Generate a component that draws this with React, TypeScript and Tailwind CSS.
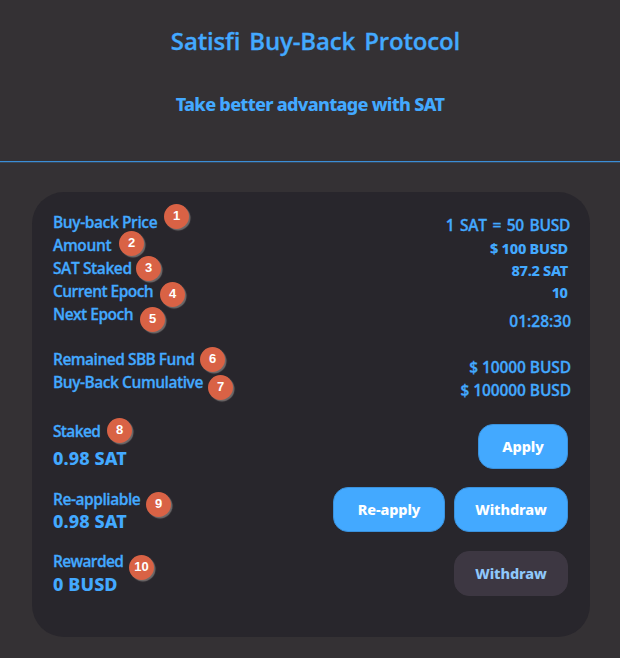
import { clsx } from "clsx";

type Label = { no: number; text: string; tracking: string; badge: string };
type Value = { text: string; style: string };

const uiFont = "font-['Open_Sans','Noto_Sans',sans-serif] font-semibold [-webkit-text-stroke:0.3px_#43a9ff]";
const boldFont = "font-['Noto_Sans',sans-serif] font-extrabold";

const epochLabels: Label[] = [
  { no: 1, text: "Buy-back Price", tracking: "tracking-[-0.4px]", badge: "left-[111px] top-[-7px]" },
  { no: 2, text: "Amount", tracking: "tracking-[-0.35px]", badge: "left-[66px] top-[-3px]" },
  { no: 3, text: "SAT Staked", tracking: "tracking-[-0.4px]", badge: "left-[83px] top-[-1px]" },
  { no: 4, text: "Current Epoch", tracking: "tracking-[-0.55px]", badge: "left-[107px] top-[2px]" },
  { no: 5, text: "Next Epoch", tracking: "tracking-[-0.5px]", badge: "left-[87px] top-[4px]" },
];

const fundLabels: Label[] = [
  { no: 6, text: "Remained SBB Fund", tracking: "tracking-[-0.5px]", badge: "left-[147px] top-[-1px]" },
  { no: 7, text: "Buy-Back Cumulative", tracking: "tracking-[-0.45px]", badge: "left-[155px] top-[4px]" },
];

const epochValues: Value[] = [
  { text: "1 SAT = 50 BUSD", style: `${uiFont} h-[23px] mr-px text-[15.5px] tracking-[-0.3px] [word-spacing:2px]` },
  { text: "$ 100 BUSD", style: `${boldFont} h-[23px] mr-[3px] text-[14.5px] tracking-[-0.25px]` },
  { text: "87.2 SAT", style: `${boldFont} h-[22px] mr-[3px] text-[14.5px] tracking-[-0.3px]` },
  { text: "10", style: `${boldFont} h-[22px] mr-[4px] text-[14.5px] tracking-[-0.8px]` },
  { text: "01:28:30", style: `${uiFont} mt-[6px] h-[23px] text-[15.5px]` },
];

const fundValues: Value[] = [
  { text: "$ 10000 BUSD", style: `${uiFont} h-[23px] text-[15.5px] tracking-[-0.1px]` },
  { text: "$ 100000 BUSD", style: `${uiFont} h-[23px] text-[15.5px] tracking-[-0.1px]` },
];

function LabelRow({ label }: { label: Label }) {
  return (
    <div className="relative flex h-[23px] items-center">
      <span className={clsx(uiFont, "text-[15.5px]", label.tracking)}>{label.text}</span>
      <span
        className={clsx(
          "absolute flex h-[25px] w-[25px] items-center justify-center rounded-full bg-[#d96245] pb-px font-['Liberation_Sans',sans-serif] text-[13px] font-bold text-white shadow-[1.5px_1.5px_1px_#6f6a6a]",
          label.badge
        )}
      >
        {label.no}
      </span>
    </div>
  );
}

function ValueRow({ value }: { value: Value }) {
  return <div className={clsx("flex items-center", value.style)}>{value.text}</div>;
}

function Balance({ label, amount, gap }: { label: Label; amount: string; gap: string }) {
  return (
    <div>
      <LabelRow label={label} />
      <p className={clsx(boldFont, "text-[18px] leading-[24px] tracking-[0.1px]", gap)}>{amount}</p>
    </div>
  );
}

function ActionButton({ text, width, disabled }: { text: string; width: string; disabled?: boolean }) {
  return (
    <button
      type="button"
      disabled={disabled}
      className={clsx(
        boldFont,
        "h-[45px] rounded-[15px] border text-[14.5px] tracking-[-0.1px]",
        width,
        disabled
          ? "border-[#3d3742] bg-[#3d3742] text-[#8fc8fa]"
          : "border-[#3a91dc] bg-[#43a9ff] text-white"
      )}
    >
      {text}
    </button>
  );
}

export default function App() {
  return (
    <main className="h-[658px] w-[620px] overflow-hidden bg-[#343134] whitespace-nowrap text-[#43a9ff]">
      <header className="flex h-[162px] flex-col items-center border-b border-[#3a8dd6] pt-[25px] shadow-[0_1px_0_#38485a]">
        <h1
          className={clsx(uiFont, "ml-[11px] text-[24px] leading-[32px] tracking-[-0.15px] [word-spacing:3px]")}
        >
          Satisfi Buy-Back Protocol
        </h1>
        <p className={clsx(boldFont, "mt-[35px] text-[18px] leading-[24px] tracking-[-0.7px]")}>
          Take better advantage with SAT
        </p>
      </header>

      <section className="mt-[30px] ml-[32px] h-[445px] w-[558px] rounded-[32px] bg-[#28262c] pt-[19px] pr-[19px] pl-[21px]">
        <div className="flex h-[137px] justify-between">
          <div>
            {epochLabels.map((label) => (
              <LabelRow key={label.no} label={label} />
            ))}
          </div>
          <div className="flex flex-col items-end pt-[3px]">
            {epochValues.map((value) => (
              <ValueRow key={value.text} value={value} />
            ))}
          </div>
        </div>

        <div className="flex h-[76px] justify-between">
          <div>
            {fundLabels.map((label) => (
              <LabelRow key={label.no} label={label} />
            ))}
          </div>
          <div className="flex flex-col items-end pt-[8px]">
            {fundValues.map((value) => (
              <ValueRow key={value.text} value={value} />
            ))}
          </div>
        </div>

        <div className="flex h-[63px] justify-between pr-[3px]">
          <div className="-mt-[4px]">
            <Balance
              label={{ no: 8, text: "Staked", tracking: "tracking-[-0.65px]", badge: "left-[54px] top-[-2px]" }}
              amount="0.98 SAT"
              gap="mt-[3px]"
            />
          </div>
          <ActionButton text="Apply" width="w-[90px]" />
        </div>

        <div className="flex h-[64px] justify-between pr-[3px]">
          <div className="pt-px">
            <Balance
              label={{ no: 9, text: "Re-appliable", tracking: "tracking-[-0.45px]", badge: "left-[93px] top-[4px]" }}
              amount="0.98 SAT"
              gap="-mt-[2px]"
            />
          </div>
          <div className="flex gap-[9px]">
            <ActionButton text="Re-apply" width="w-[112px]" />
            <ActionButton text="Withdraw" width="w-[114px]" />
          </div>
        </div>

        <div className="flex justify-between pr-[3px]">
          <div className="-mt-px">
            <Balance
              label={{ no: 10, text: "Rewarded", tracking: "tracking-[-0.65px]", badge: "left-[76px] top-[5px]" }}
              amount="0 BUSD"
              gap="-mt-px"
            />
          </div>
          <ActionButton text="Withdraw" width="w-[114px]" disabled />
        </div>
      </section>
    </main>
  );
}
